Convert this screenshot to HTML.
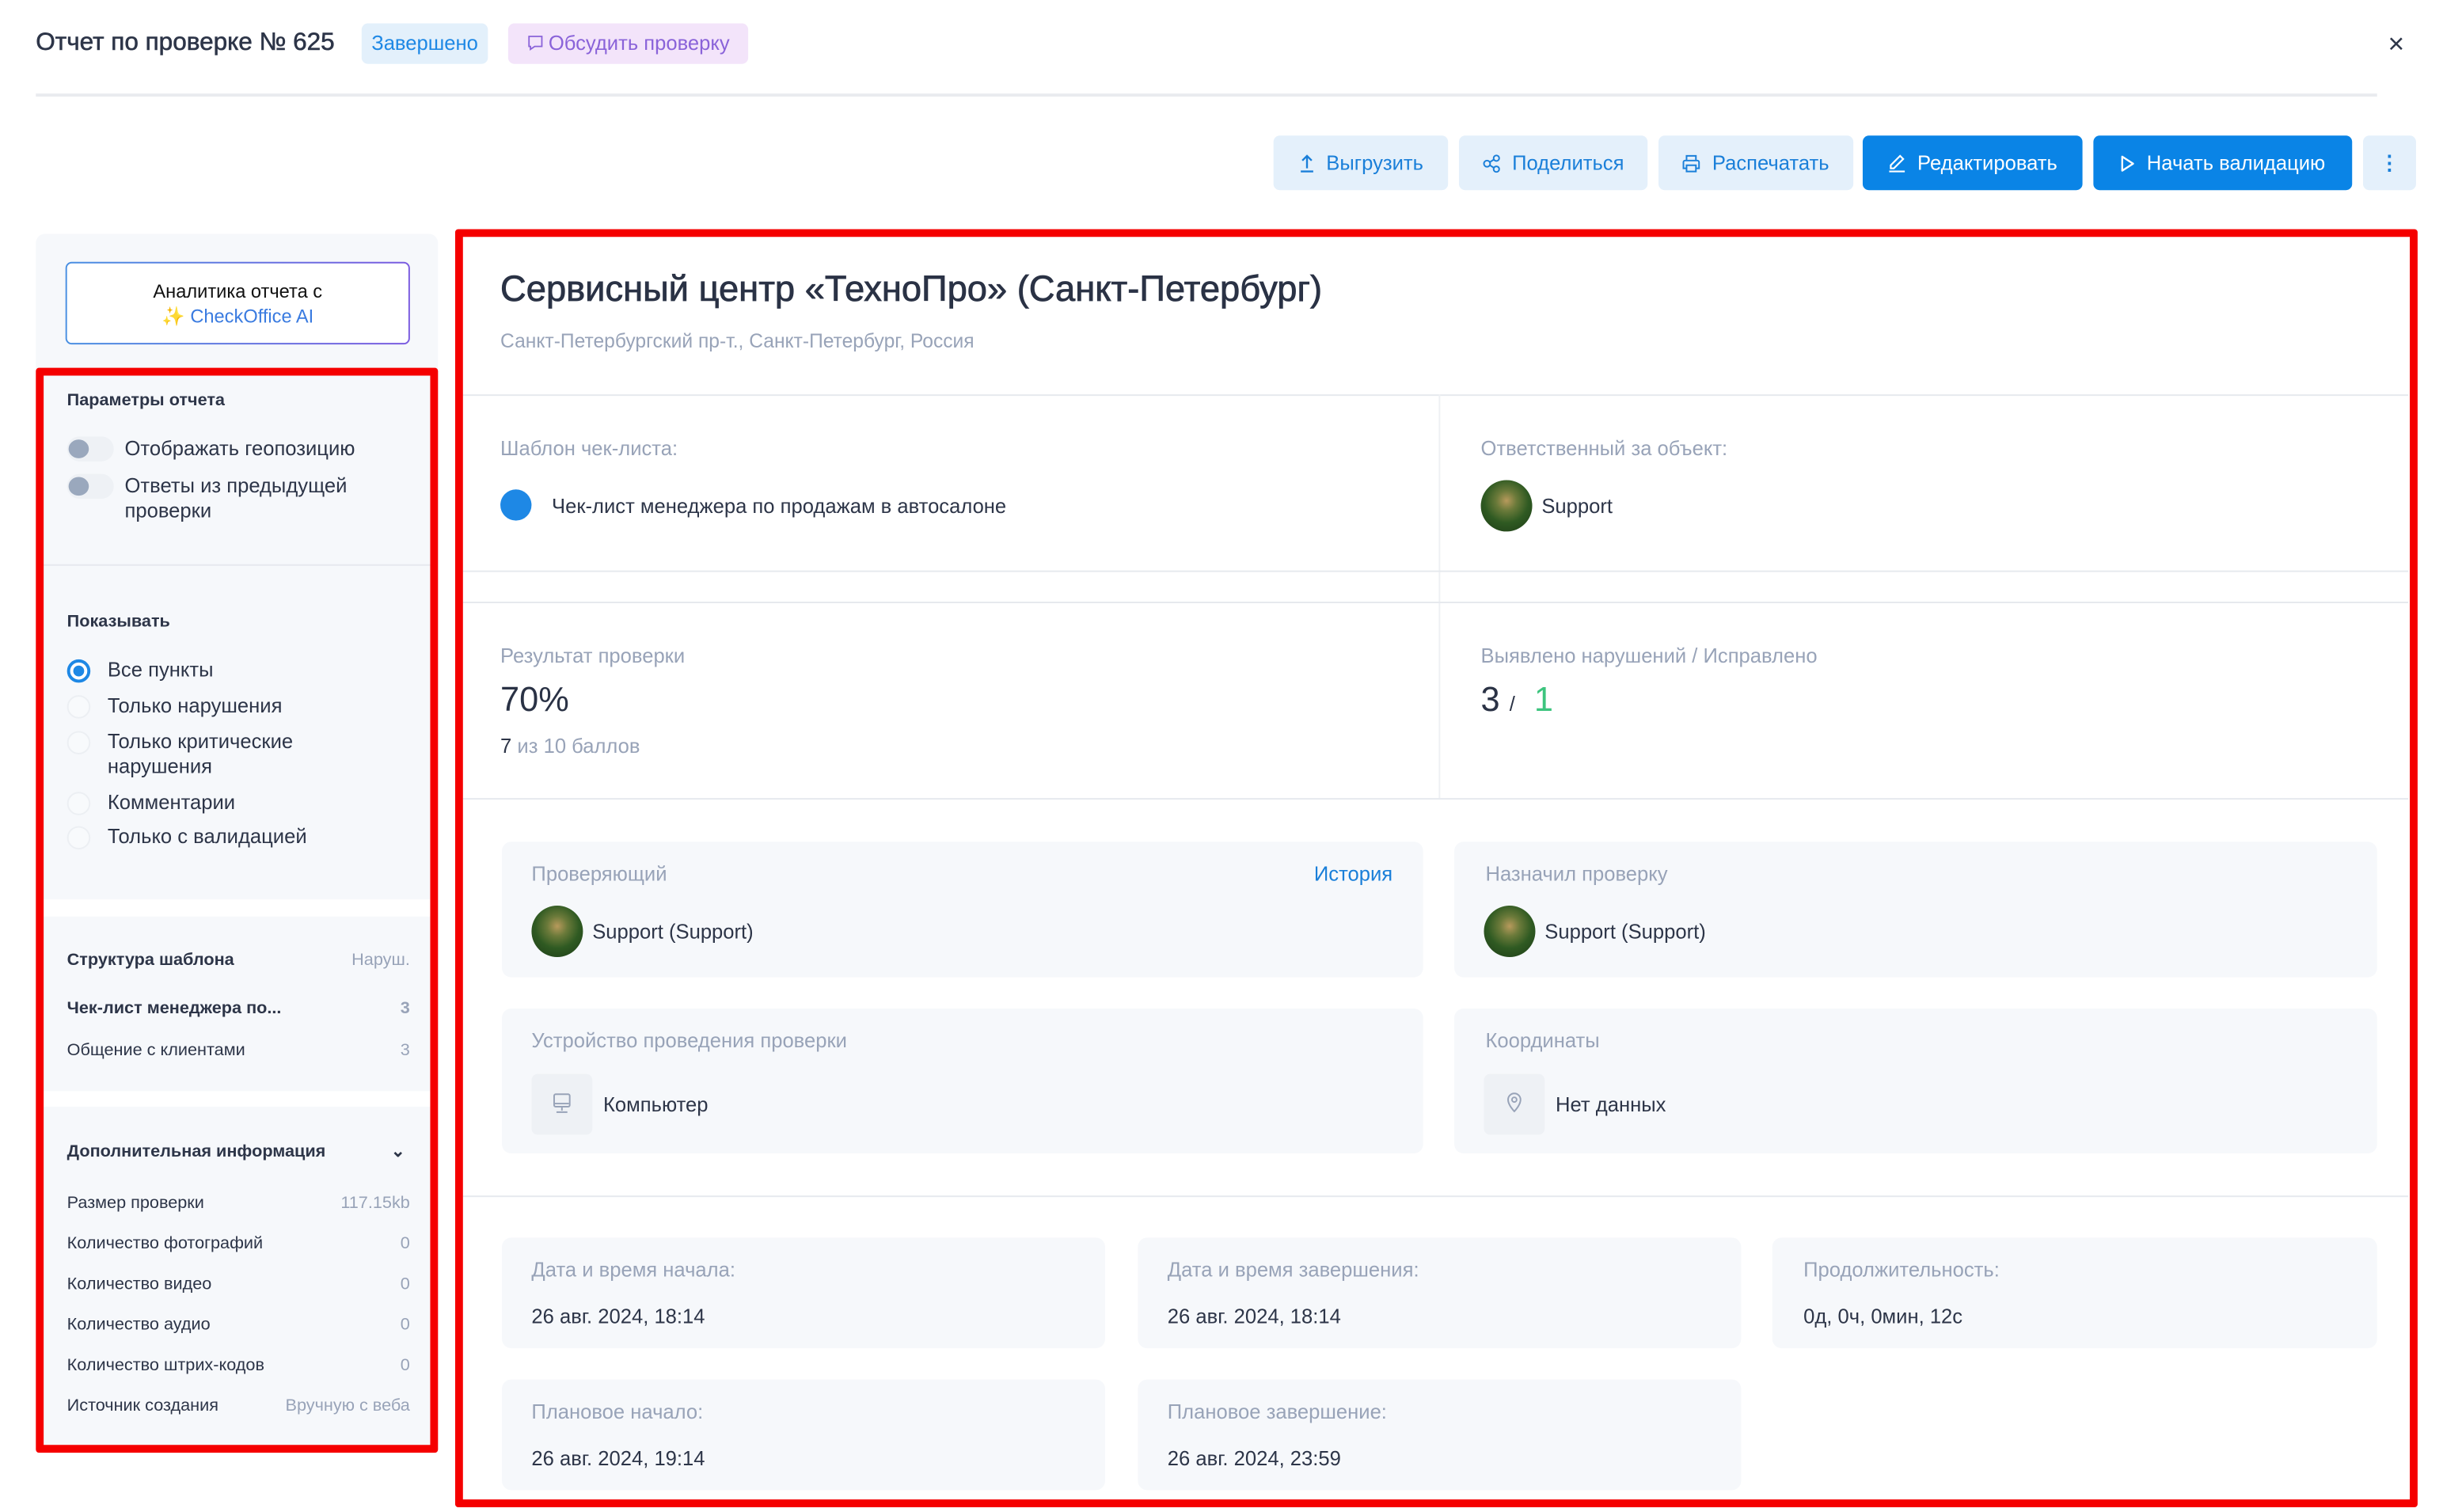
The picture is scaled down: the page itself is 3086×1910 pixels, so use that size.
<!DOCTYPE html>
<html><head><meta charset="utf-8"><style>
html,body{margin:0;padding:0;background:#fff;width:3086px;height:1908px;overflow:hidden}
#w{position:absolute;left:0;top:0;width:1570px;height:970px;transform:scale(1.969);transform-origin:0 0;font-family:"Liberation Sans","Noto Sans CJK SC",sans-serif;color:#2d3548}
.a{position:absolute}
.t{position:absolute;white-space:nowrap;line-height:16px;font-size:13px}
.g{color:#98a3b8}
.b{font-weight:bold}
.btn{position:absolute;top:87px;height:35px;border-radius:4px;background:#e4f0fb;color:#1a7fd9;font-size:13px;line-height:35px;text-align:center;white-space:nowrap}
.btn.p{background:#0a84e6;color:#fff}
.btn svg{vertical-align:-2px;margin-right:7px}
.card{position:absolute;background:#f6f8fb;border-radius:6px}
.hl{position:absolute;height:1px;background:#e6e9ee}
.rad{position:absolute;left:43px;width:15px;height:15px;border-radius:50%;border:1px solid #eceff3;background:#f8fafc;box-sizing:border-box}
.tog{position:absolute;left:43px;width:30px;height:16px;border-radius:8px;background:#eef1f5}
.tog:before{content:"";position:absolute;left:1px;top:2px;width:13px;height:12px;border-radius:50%;background:#9aa8bd}
.av{position:absolute;width:33px;height:33px;border-radius:50%;background:radial-gradient(circle at 50% 40%,#b89a5c 0,#6b7a3a 25%,#2f5a22 55%,#1d3a16 100%)}
.row{position:absolute;left:43px;width:220px;font-size:11px;line-height:14px}
.row span{position:absolute;right:0;color:#98a3b8}
</style></head><body><div id="w">
<div class="t" style="left:23px;top:19px;font-size:16px;line-height:18px;color:#2d3548;-webkit-text-stroke:0.3px #2d3548">Отчет по проверке № 625</div>
<div class="a" style="left:232px;top:15px;width:81px;height:26px;border-radius:4px;background:#e3f0fb;color:#1e88e5;font-size:13px;line-height:26px;text-align:center">Завершено</div>
<div class="a" style="left:326px;top:15px;width:154px;height:26px;border-radius:4px;background:#f3e4fa;color:#8a63d9;font-size:13px;line-height:26px;text-align:center"><svg width="11" height="11" viewBox="0 0 12 12" style="vertical-align:-1px;margin-right:3px"><path d="M1.5 1.5h9v7h-5l-3 2v-2h-1z" fill="none" stroke="#8a63d9" stroke-width="1"/></svg>Обсудить проверку</div>
<div class="t" style="left:1532px;top:18px;font-size:18px;line-height:20px;color:#2d3548">×</div>
<div class="hl" style="left:23px;top:60px;width:1502px;height:2px;background:#e9ebef"></div>

<div class="btn" style="left:817px;width:112px"><svg width="11" height="12" viewBox="0 0 11 12"><path d="M5.5 9V1M2.5 4l3-3 3 3M1.5 11h8" fill="none" stroke="#1a7fd9" stroke-width="1.2"/></svg>Выгрузить</div>
<div class="btn" style="left:936px;width:121px"><svg width="12" height="12" viewBox="0 0 12 12"><circle cx="3" cy="6" r="2" fill="none" stroke="#1a7fd9"/><circle cx="9" cy="2.5" r="1.8" fill="none" stroke="#1a7fd9"/><circle cx="9" cy="9.5" r="1.8" fill="none" stroke="#1a7fd9"/><path d="M4.8 5l2.5-1.6M4.8 7l2.5 1.6" stroke="#1a7fd9"/></svg>Поделиться</div>
<div class="btn" style="left:1064px;width:125px"><svg width="12" height="12" viewBox="0 0 12 12"><path d="M3 4V1h6v3M2 4h8a1 1 0 0 1 1 1v4H9M3 9H1V5a1 1 0 0 1 1-1M3 7h6v4H3z" fill="none" stroke="#1a7fd9"/></svg>Распечатать</div>
<div class="btn p" style="left:1195px;width:141px"><svg width="12" height="12" viewBox="0 0 12 12"><path d="M8 1l2 2-6 6H2V7z M1 11h10" fill="none" stroke="#fff" stroke-width="1.1"/></svg>Редактировать</div>
<div class="btn p" style="left:1343px;width:166px"><svg width="10" height="12" viewBox="0 0 10 12"><path d="M1.5 1.5v9l7-4.5z" fill="none" stroke="#fff" stroke-width="1.2" stroke-linejoin="round"/></svg>Начать валидацию</div>
<div class="btn" style="left:1516px;width:34px;font-weight:bold">⋮</div>

<!-- left panel -->
<div class="a" style="left:23px;top:150px;width:258px;height:782px;background:#f6f8fb;border-radius:6px"></div>
<div class="a" style="left:42px;top:168px;width:221px;height:53px;border-radius:4px;background:linear-gradient(90deg,#4a90e2,#7b5ce0);padding:1px;box-sizing:border-box"><div style="background:#fff;border-radius:3px;width:100%;height:100%;text-align:center;font-size:12px;line-height:16px;padding-top:10px;box-sizing:border-box;color:#111">Аналитика отчета с<br><span style="color:#f5c518">✨</span> <span style="color:#3a7be0">CheckOffice AI</span></div></div>
<div class="a" style="left:28px;top:362px;width:248px;height:1px;background:#e6e9ee"></div>
<div class="a" style="left:28px;top:577px;width:248px;height:11px;background:#fff"></div>
<div class="a" style="left:28px;top:700px;width:248px;height:10px;background:#fff"></div>
<div class="a" style="left:23px;top:236px;width:258px;height:696px;border:5px solid #f50000;box-sizing:border-box;border-radius:2px"></div>

<div class="t b" style="left:43px;top:249px;font-size:11px">Параметры отчета</div>
<div class="tog" style="top:280px"></div><div class="t" style="left:80px;top:280px">Отображать геопозицию</div>
<div class="tog" style="top:304px"></div><div class="t" style="left:80px;top:304px">Ответы из предыдущей<br>проверки</div>
<div class="t b" style="left:43px;top:391px;font-size:11px">Показывать</div>
<div class="rad" style="top:423px;border:2px solid #1e88e5;background:#fff"><div style="position:absolute;left:2px;top:2px;width:7px;height:7px;border-radius:50%;background:#1e88e5"></div></div>
<div class="t" style="left:69px;top:422px">Все пункты</div>
<div class="rad" style="top:446px"></div><div class="t" style="left:69px;top:445px">Только нарушения</div>
<div class="rad" style="top:469px"></div><div class="t" style="left:69px;top:468px">Только критические<br>нарушения</div>
<div class="rad" style="top:508px"></div><div class="t" style="left:69px;top:507px">Комментарии</div>
<div class="rad" style="top:530px"></div><div class="t" style="left:69px;top:529px">Только с валидацией</div>

<div class="row b" style="top:609px">Структура шаблона<span style="font-weight:normal">Наруш.</span></div>
<div class="row b" style="top:640px">Чек-лист менеджера по...<span>3</span></div>
<div class="row" style="top:667px">Общение с клиентами<span>3</span></div>

<div class="row b" style="top:732px">Дополнительная информация<span style="color:#2d3548;right:3px">⌄</span></div>
<div class="row" style="top:765px">Размер проверки<span>117.15kb</span></div>
<div class="row" style="top:791px">Количество фотографий<span>0</span></div>
<div class="row" style="top:817px">Количество видео<span>0</span></div>
<div class="row" style="top:843px">Количество аудио<span>0</span></div>
<div class="row" style="top:869px">Количество штрих-кодов<span>0</span></div>
<div class="row" style="top:895px">Источник создания<span>Вручную с веба</span></div>

<!-- main -->
<div class="t" style="left:321px;top:172px;font-size:23px;line-height:26px;color:#2a3245;-webkit-text-stroke:0.4px #2a3245">Сервисный центр «ТехноПро» (Санкт-Петербург)</div>
<div class="t g" style="left:321px;top:211px;font-size:12.5px">Санкт-Петербургский пр-т., Санкт-Петербург, Россия</div>
<div class="hl" style="left:297px;top:253px;width:1248px"></div>
<div class="a" style="left:923px;top:253px;width:1px;height:259px;background:#eef0f3"></div>
<div class="t g" style="left:321px;top:280px">Шаблон чек-листа:</div>
<div class="a" style="left:321px;top:314px;width:20px;height:20px;border-radius:50%;background:#1e88e5"></div>
<div class="t" style="left:354px;top:317px">Чек-лист менеджера по продажам в автосалоне</div>
<div class="t g" style="left:950px;top:280px">Ответственный за объект:</div>
<div class="av" style="left:950px;top:308px"></div>
<div class="t" style="left:989px;top:317px">Support</div>
<div class="hl" style="left:297px;top:366px;width:1248px"></div>
<div class="hl" style="left:297px;top:386px;width:1248px"></div>
<div class="t g" style="left:321px;top:413px">Результат проверки</div>
<div class="t" style="left:321px;top:437px;font-size:22px;line-height:24px;color:#2a3245">70%</div>
<div class="t" style="left:321px;top:471px"><span>7</span> <span class="g">из 10 баллов</span></div>
<div class="t g" style="left:950px;top:413px">Выявлено нарушений / Исправлено</div>
<div class="t" style="left:950px;top:437px;font-size:22px;line-height:24px;color:#2a3245">3 <span style="font-size:13px">/</span> &nbsp;<span style="color:#3dc47e">1</span></div>
<div class="hl" style="left:297px;top:512px;width:1248px"></div>

<div class="card" style="left:322px;top:540px;width:591px;height:87px"></div>
<div class="t g" style="left:341px;top:553px">Проверяющий</div>
<div class="t" style="left:843px;top:553px;color:#1a7fd9">История</div>
<div class="av" style="left:341px;top:581px"></div>
<div class="t" style="left:380px;top:590px">Support (Support)</div>
<div class="card" style="left:933px;top:540px;width:592px;height:87px"></div>
<div class="t g" style="left:953px;top:553px">Назначил проверку</div>
<div class="av" style="left:952px;top:581px"></div>
<div class="t" style="left:991px;top:590px">Support (Support)</div>

<div class="card" style="left:322px;top:647px;width:591px;height:93px"></div>
<div class="t g" style="left:341px;top:660px">Устройство проведения проверки</div>
<div class="a" style="left:341px;top:689px;width:39px;height:39px;border-radius:4px;background:#eef1f5"></div>
<svg class="a" style="left:354px;top:701px" width="13" height="14" viewBox="0 0 13 14"><rect x="1.5" y="1" width="10" height="8" rx="1" fill="none" stroke="#98a3b8"/><path d="M6.5 9v2.5M3 12.5h7M2 7h9" stroke="#98a3b8"/></svg>
<div class="t" style="left:387px;top:701px">Компьютер</div>
<div class="card" style="left:933px;top:647px;width:592px;height:93px"></div>
<div class="t g" style="left:953px;top:660px">Координаты</div>
<div class="a" style="left:952px;top:689px;width:39px;height:39px;border-radius:4px;background:#eef1f5"></div>
<svg class="a" style="left:965px;top:700px" width="13" height="14" viewBox="0 0 13 14"><path d="M6.5 13s-4-4-4-7.5a4 4 0 0 1 8 0C10.5 9 6.5 13 6.5 13z" fill="none" stroke="#98a3b8"/><circle cx="6.5" cy="5.5" r="1.5" fill="none" stroke="#98a3b8"/></svg>
<div class="t" style="left:998px;top:701px">Нет данных</div>
<div class="hl" style="left:297px;top:767px;width:1248px"></div>

<div class="card" style="left:322px;top:794px;width:387px;height:71px"></div>
<div class="t g" style="left:341px;top:807px">Дата и время начала:</div>
<div class="t" style="left:341px;top:837px">26 авг. 2024, 18:14</div>
<div class="card" style="left:730px;top:794px;width:387px;height:71px"></div>
<div class="t g" style="left:749px;top:807px">Дата и время завершения:</div>
<div class="t" style="left:749px;top:837px">26 авг. 2024, 18:14</div>
<div class="card" style="left:1137px;top:794px;width:388px;height:71px"></div>
<div class="t g" style="left:1157px;top:807px">Продолжительность:</div>
<div class="t" style="left:1157px;top:837px">0д, 0ч, 0мин, 12с</div>
<div class="card" style="left:322px;top:885px;width:387px;height:71px"></div>
<div class="t g" style="left:341px;top:898px">Плановое начало:</div>
<div class="t" style="left:341px;top:928px">26 авг. 2024, 19:14</div>
<div class="card" style="left:730px;top:885px;width:387px;height:71px"></div>
<div class="t g" style="left:749px;top:898px">Плановое завершение:</div>
<div class="t" style="left:749px;top:928px">26 авг. 2024, 23:59</div>

<div class="a" style="left:292px;top:147px;width:1259px;height:820px;border:5px solid #f50000;box-sizing:border-box;border-radius:2px"></div>
</div></body></html>
